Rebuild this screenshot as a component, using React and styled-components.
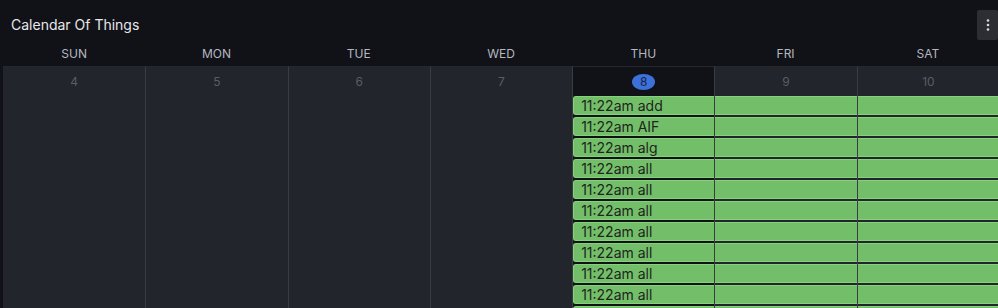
import React from "react";
import styled, { createGlobalStyle } from "styled-components";

const Global = createGlobalStyle`
  html, body { margin: 0; padding: 0; background: #111217; overflow: hidden; }
  body { font-family: Inter, "Noto Sans", sans-serif; }
`;

const Panel = styled.div`
  width: 998px;
  height: 308px;
  background: #111217;
  display: flex;
  flex-direction: column;
  overflow: hidden;
`;

const TitleBar = styled.div`
  height: 40px;
  display: flex;
  align-items: flex-start;
  justify-content: space-between;
  padding-left: 11px;
  box-sizing: border-box;
`;

const Title = styled.h2`
  margin: 15px 0 0;
  font-size: 14px;
  font-weight: 400;
  color: #e6e7ea;
  line-height: 20px;
`;

const MenuButton = styled.button`
  width: 21px;
  height: 30px;
  margin-top: 10px;
  border: none;
  border-radius: 2px;
  background: #2c2e34;
  display: flex;
  align-items: center;
  justify-content: center;
  padding: 0;
`;

const Grid = styled.div`
  width: 996px;
  margin-left: 3px;
  display: grid;
  grid-template-columns: repeat(7, 1fr);
  flex: 1;
  grid-template-rows: 26px 1fr;
`;

const DayName = styled.div`
  font-size: 12px;
  color: #b4b7c0;
  text-align: center;
  line-height: 24px;
  padding-top: 2px;
`;

const Cell = styled.div`
  background: ${(p) => (p.$today ? "#111217" : "#22252b")};
  border-left: ${(p) => (p.$first ? "none" : "1px solid #3a3c44")};
  border-top: 1px solid #26282e;
  display: flex;
  flex-direction: column;
  min-width: 0;
`;

const DateRow = styled.div`
  height: 29px;
  display: flex;
  justify-content: center;
  align-items: center;
`;

const DateNum = styled.span`
  font-size: 12px;
  color: #5a5d66;
`;

const TodayBadge = styled.span`
  width: 23px;
  height: 16px;
  border-radius: 50%;
  background: #3d71d9;
  color: #17224a;
  font-size: 12px;
  display: flex;
  align-items: center;
  justify-content: center;
`;

const Events = styled.div`
  display: flex;
  flex-direction: column;
  gap: 2px;
`;

const EventBar = styled.div`
  height: 19px;
  box-sizing: border-box;
  background: #73bf69;
  border-top: 1px solid #86d27b;
  border-bottom: 1px solid #86d27b;
  border-left: ${(p) => (p.$start ? "1px solid #86d27b" : "none")};
  border-radius: ${(p) => (p.$start ? "3px 0 0 3px" : "0")};
  color: #1f2420;
  font-size: 14px;
  line-height: 17px;
  padding-left: 7px;
  white-space: nowrap;
  overflow: hidden;
`;

const days = ["SUN", "MON", "TUE", "WED", "THU", "FRI", "SAT"];
const dates = [4, 5, 6, 7, 8, 9, 10];
const events = ["add", "AIF", "alg", "all", "all", "all", "all", "all", "all", "all", "all"];

function Dots() {
  return (
    <svg width="4" height="12" viewBox="0 0 4 12">
      <circle cx="2" cy="1.5" r="1.3" fill="#d8d9dd" />
      <circle cx="2" cy="6" r="1.3" fill="#d8d9dd" />
      <circle cx="2" cy="10.5" r="1.3" fill="#d8d9dd" />
    </svg>
  );
}

export default function App() {
  return (
    <Panel>
      <Global />
      <TitleBar>
        <Title>Calendar Of Things</Title>
        <MenuButton aria-label="menu">
          <Dots />
        </MenuButton>
      </TitleBar>
      <Grid>
        {days.map((d) => (
          <DayName key={d}>{d}</DayName>
        ))}
        {dates.map((n, i) => (
          <Cell key={n} $first={i === 0} $today={n === 8}>
            <DateRow>
              {n === 8 ? <TodayBadge>{n}</TodayBadge> : <DateNum>{n}</DateNum>}
            </DateRow>
            {n >= 8 && (
              <Events>
                {events.map((e, k) => (
                  <EventBar key={k} $start={n === 8}>
                    {n === 8 ? `11:22am ${e}` : "\u00a0"}
                  </EventBar>
                ))}
              </Events>
            )}
          </Cell>
        ))}
      </Grid>
    </Panel>
  );
}
